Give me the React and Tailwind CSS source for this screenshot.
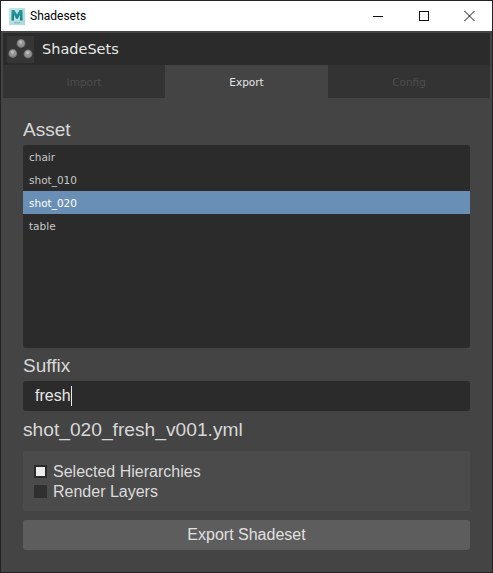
import React from "react";

const sans = "font-['Liberation_Sans',Arial,sans-serif]";
const dejavu = "font-['DejaVu_Sans',Verdana,sans-serif]";

const MayaIcon = () => (
  <svg width="16" height="17" viewBox="0 0 16 17">
    <defs>
      <linearGradient id="mayaBg" x1="0" y1="0" x2="1" y2="1">
        <stop offset="0" stopColor="#c8e8e7" />
        <stop offset="1" stopColor="#a8d8d8" />
      </linearGradient>
      <linearGradient id="mayaM" x1="0" y1="0" x2="0" y2="1">
        <stop offset="0" stopColor="#2a9aa2" />
        <stop offset="1" stopColor="#127a82" />
      </linearGradient>
    </defs>
    <rect width="16" height="17" fill="url(#mayaBg)" />
    <path d="M2.5 2 H5.5 L8 6.6 L10.5 2 H13.5 V12.5 H11 V6.8 L8.8 10.8 H7.2 L5 6.8 V12.5 H2.5 Z" fill="url(#mayaM)" />
    <rect x="5" y="14.3" width="6" height="1" fill="#6fb5b8" />
  </svg>
);

const Ball = ({ cx, cy }) => (
  <g>
    <circle cx={cx} cy={cy} r="4.4" fill="#747474" />
    <circle cx={cx} cy={cy - 0.3} r="3.4" fill="#959595" />
    <circle cx={cx - 0.3} cy={cy - 1.4} r="1.7" fill="#bcbcbc" />
  </g>
);

const ShadeIcon = () => (
  <div className="w-[27px] h-[27px] bg-[#363636]">
    <svg width="27" height="27" viewBox="0 0 27 27">
      <Ball cx={14} cy={7.5} />
      <Ball cx={5.8} cy={17.5} />
      <Ball cx={21} cy={18} />
    </svg>
  </div>
);

const Tab = ({ label, active, className }) => (
  <div
    className={`${className} flex items-center justify-center pt-[2px] text-[10.5px] ${dejavu} ${
      active ? "bg-[#444444] text-[#e4e4e4] rounded-t-[6px]" : "bg-[#333333] text-[#4e4e4e]"
    }`}
  >
    {label}
  </div>
);

const assets = ["chair", "shot_010", "shot_020", "table"];

const App = () => {
  return (
    <div className={`w-[493px] h-[573px] flex flex-col bg-[#444444] border border-[#222222] overflow-hidden ${sans}`}>
      <div className="h-[30px] shrink-0 bg-white flex items-center pl-[8px]">
        <MayaIcon />
        <span className="ml-[5px] text-[12px] text-black font-['Roboto',sans-serif]">Shadesets</span>
        <div className="ml-auto flex items-center h-full text-black">
          <svg width="46" height="30" viewBox="0 0 46 30">
            <path d="M18 15.5 H28" stroke="#111" strokeWidth="1" />
          </svg>
          <svg width="46" height="30" viewBox="0 0 46 30">
            <rect x="18.5" y="10.5" width="9" height="9" fill="none" stroke="#111" strokeWidth="1" />
          </svg>
          <svg width="45" height="30" viewBox="0 0 45 30">
            <path d="M17.5 10 L27.5 20 M27.5 10 L17.5 20" stroke="#111" strokeWidth="1" />
          </svg>
        </div>
      </div>

      <div className="mt-[2px] mx-[2px] shrink-0">
        <div className="h-[32px] bg-[#2b2b2b] flex items-center pl-[4px]">
          <ShadeIcon />
          <span className={`ml-[8px] pt-[1px] text-[14.5px] text-[#e8e8e8] ${dejavu}`}>ShadeSets</span>
        </div>
        <div className="flex h-[33px]">
          <Tab label="Import" className="w-[162px]" />
          <Tab label="Export" active className="w-[163px]" />
          <Tab label="Config" className="w-[162px]" />
        </div>
      </div>

      <div className="flex-1 flex flex-col px-[22px]">
        <div className="mt-[19px] h-[28px] text-[19px] leading-[26px] text-[#d8d8d8]">Asset</div>
        <div className="h-[203px] shrink-0 bg-[#2b2b2b] rounded-[3px] overflow-hidden">
          {assets.map((a) => (
            <div
              key={a}
              className={`h-[23px] pl-[6px] pt-[3px] flex items-center text-[10.5px] ${dejavu} ${
                a === "shot_020" ? "bg-[#6a8fb6] text-white" : "text-[#c8c8c8]"
              }`}
            >
              {a}
            </div>
          ))}
        </div>
        <div className="mt-[6px] h-[27px] text-[19px] leading-[24px] text-[#d8d8d8]">Suffix</div>
        <div className="h-[30px] shrink-0 bg-[#2b2b2b] rounded-[3px] flex items-center pl-[12px] text-[16px] text-[#e8e8e8]">
          fresh
          <span className="w-px h-[20px] bg-[#e8e8e8]" />
        </div>
        <div className="mt-[8px] h-[24px] text-[19.2px] leading-[22px] text-[#d8d8d8]">shot_020_fresh_v001.yml</div>
        <div className="mt-[8px] h-[60px] shrink-0 bg-[#4b4b4b] rounded-[2px] flex flex-col pl-[11px] pt-[10px] text-[16px] leading-[20px] text-[#dcdcdc]">
          <div className="h-[20px] flex items-start gap-[6px]">
            <span className="mt-[4px] w-[13px] h-[13px] bg-[#ececec] border-2 border-[#2b2b2b]" />
            <span className="pt-[1px]">Selected Hierarchies</span>
          </div>
          <div className="h-[20px] flex items-start gap-[6px]">
            <span className="mt-[4px] w-[13px] h-[13px] bg-[#2f2f2f]" />
            <span className="pt-[1px]">Render Layers</span>
          </div>
        </div>
        <button className="mt-[9px] h-[30px] shrink-0 bg-[#5d5d5d] rounded-[3px] text-[16px] text-[#e0e0e0]">
          Export Shadeset
        </button>
      </div>
    </div>
  );
};

export default App;
